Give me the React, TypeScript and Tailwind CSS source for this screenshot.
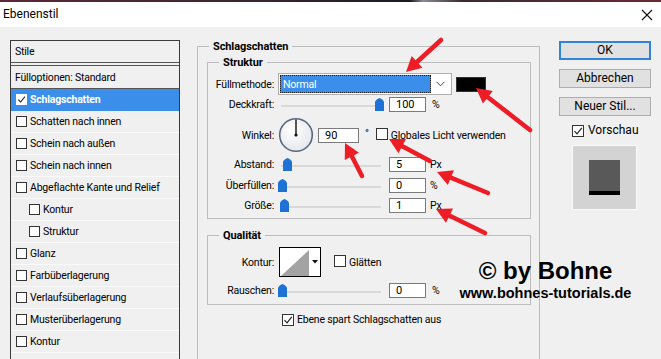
import React from "react";

function Check({ checked = false, size = 12, white = false }: { checked?: boolean; size?: number; white?: boolean }) {
  return (
    <span
      className={`inline-flex items-center justify-center shrink-0 border ${white ? "border-white bg-white" : "border-[#333333] bg-white"}`}
      style={{ width: size, height: size }}
    >
      {checked && (
        <svg width={size - 2} height={size - 2} viewBox="0 0 10 10">
          <path d="M1.5 5.2 L4 7.8 L8.8 1.8" fill="none" stroke="#222" strokeWidth="1.2" />
        </svg>
      )}
    </span>
  );
}

function ListRow({
  label,
  indent = false,
  checked = false,
  selected = false,
}: {
  label: string;
  indent?: boolean;
  checked?: boolean;
  selected?: boolean;
}) {
  return (
    <div
      className={`h-[22px] flex items-center gap-[3px] border-b ${
        selected ? "bg-[#3b8fea] border-[#3b8fea] text-white font-bold" : "border-[#fafafa]"
      } ${indent ? "pl-[18px]" : "pl-[5px]"}`}
    >
      <Check size={11} checked={checked} white={selected} />
      <span>{label}</span>
    </div>
  );
}

function Thumb() {
  return (
    <svg width="9" height="13" viewBox="0 0 9 13">
      <path d="M4.5 0 C6.5 1 9 2.5 9 4 V13 H0 V4 C0 2.5 2.5 1 4.5 0Z" fill="#1f72d5" />
    </svg>
  );
}

function Slider({ pos, w = 100 }: { pos: number; w?: number }) {
  return (
    <div className="relative h-[15px] ml-[7px] w-[108px] shrink-0">
      <div className="absolute top-[8px] left-0 h-[2px] bg-[#d9d9d9]" style={{ width: w }} />
      <div className="absolute top-[1px]" style={{ left: pos - 4 }}>
        <Thumb />
      </div>
    </div>
  );
}

function NumInput({ value, w = 37 }: { value: string; w?: number }) {
  return (
    <div
      className="h-[15px] border border-[#7a7a7a] bg-white pl-[6px] flex items-center text-[11px] leading-none shrink-0 tracking-normal"
      style={{ width: w }}
    >
      {value}
    </div>
  );
}

function Label({ children }: { children: React.ReactNode }) {
  return <div className="w-[66px] text-right shrink-0">{children}</div>;
}

function Dial() {
  return (
    <svg width="36" height="36" viewBox="0 0 36 36" className="shrink-0">
      <defs>
        <radialGradient id="dg" cx="0.4" cy="0.35" r="0.7">
          <stop offset="0" stopColor="#ffffff" />
          <stop offset="1" stopColor="#e4e6ea" />
        </radialGradient>
      </defs>
      <circle cx="18" cy="18" r="16.3" fill="url(#dg)" stroke="#5a6781" strokeWidth="1.6" />
      <line x1="18" y1="18" x2="18" y2="2.5" stroke="#111" strokeWidth="1.4" />
      <circle cx="18" cy="18" r="1.6" fill="#111" />
    </svg>
  );
}

function Button({ children, primary = false }: { children: React.ReactNode; primary?: boolean }) {
  return (
    <div
      className={`h-[19px] w-[92px] flex items-center justify-center bg-[#e1e1e1] text-[12px] tracking-normal ${
        primary ? "border-2 border-[#2f83d8]" : "border border-[#adadad]"
      }`}
    >
      {children}
    </div>
  );
}

const arrows: [number, number, number, number][] = [
  [441, 40, 406, 72],
  [530, 130, 476, 88],
  [362, 176, 345, 143],
  [430, 161, 389, 139],
  [488, 193, 437, 172],
  [485, 233, 436, 209],
];

function Arrows() {
  return (
    <svg className="absolute inset-0 pointer-events-none" width="661" height="359">
      {arrows.map(([x1, y1, x2, y2], i) => {
        const dx = x2 - x1;
        const dy = y2 - y1;
        const len = Math.hypot(dx, dy);
        const ux = dx / len;
        const uy = dy / len;
        const L = 15;
        const W = 8;
        const bx = x2 - ux * L;
        const by = y2 - uy * L;
        const px = -uy;
        const py = ux;
        return (
          <g key={i}>
            <line x1={x1} y1={y1} x2={bx + ux * 2} y2={by + uy * 2} stroke="#ee1c24" strokeWidth="4.5" strokeLinecap="round" />
            <polygon
              points={`${x2},${y2} ${bx + px * W},${by + py * W} ${bx - px * W},${by - py * W}`}
              fill="#ee1c24"
            />
          </g>
        );
      })}
    </svg>
  );
}

export default function App() {
  return (
    <div className="relative w-[661px] h-[359px] overflow-hidden bg-[#f0f0f0] font-['Roboto',sans-serif] text-[10.5px] tracking-[-0.2px] text-black leading-[13px]">
      <div className="h-[2px] bg-[linear-gradient(90deg,#5a2a35_0%,#3a2530_40%,#1a1a24_62%,#8a8a96_64%,#3a2a30_70%,#6a2a35_100%)]" />
      <div className="h-[25px] bg-white flex items-center justify-between pl-[3px] pr-[8px]">
        <span className="text-[12px] tracking-normal">Ebenenstil</span>
        <svg width="12" height="12" viewBox="0 0 12 12">
          <path d="M1 1 L11 11 M11 1 L1 11" stroke="#111" strokeWidth="1.1" />
        </svg>
      </div>

      <div className="flex items-start">
        {/* Left styles list */}
        <div className="ml-[10px] mt-[13px] w-[170px] h-[330px] border border-[#3a3a3a] border-b-0">
          <div className="h-[22px] flex items-center pl-[4px] border-b border-[#555]">Stile</div>
          <div className="h-[2px]" />
          <div className="h-[24px] flex items-center pl-[4px] border-t border-b border-[#555]">
            Fülloptionen: Standard
          </div>
          <ListRow label="Schlagschatten" checked selected />
          <ListRow label="Schatten nach innen" />
          <ListRow label="Schein nach außen" />
          <ListRow label="Schein nach innen" />
          <ListRow label="Abgeflachte Kante und Relief" />
          <ListRow label="Kontur" indent />
          <ListRow label="Struktur" indent />
          <ListRow label="Glanz" />
          <ListRow label="Farbüberlagerung" />
          <ListRow label="Verlaufsüberlagerung" />
          <ListRow label="Musterüberlagerung" />
          <ListRow label="Kontur" />
        </div>

        {/* Middle: Schlagschatten group */}
        <fieldset className="ml-[17px] mt-[13px] w-[343px] h-[330px] border border-b-0 border-[#bcbcbc]">
          <legend className="ml-[11px] px-[4px] font-bold text-[11px] tracking-[-0.1px]">Schlagschatten</legend>

          <fieldset className="ml-[9px] mt-[3px] w-[324px] border border-[#bcbcbc] pb-[5px]">
            <legend className="ml-[11px] px-[4px] font-bold text-[11px] tracking-[-0.1px]">Struktur</legend>

            <div className="mt-[4px] h-[22px] flex items-center">
              <Label>Füllmethode:</Label>
              <div className="ml-[4px] w-[174px] h-[22px] border border-[#adadad] bg-white flex items-center p-[1px]">
                <div className="flex-1 h-full bg-[#3b8fea] border border-dotted border-[#1a1a1a] text-white flex items-center pl-[2px]">
                  Normal
                </div>
                <div className="w-[19px] flex items-center justify-center">
                  <svg width="9" height="6" viewBox="0 0 9 6">
                    <path d="M0.5 0.8 L4.5 4.8 L8.5 0.8" fill="none" stroke="#444" strokeWidth="1" />
                  </svg>
                </div>
              </div>
              <div className="ml-[4px] w-[30px] h-[15px] bg-black border border-[#333]" />
            </div>

            <div className="mt-[2px] h-[15px] flex items-center">
              <Label>Deckkraft:</Label>
              <Slider pos={98} w={98} />
              <NumInput value="100" />
              <span className="ml-[6px]">%</span>
            </div>

            <div className="mt-[6px] h-[34px] flex items-center">
              <Label>Winkel:</Label>
              <div className="ml-[4px]">
                <Dial />
              </div>
              <div className="ml-[4px]">
                <NumInput value="90" w={41} />
              </div>
              <span className="ml-[6px] self-start mt-[9px]">°</span>
              <div className="ml-[7px]">
                <Check />
              </div>
              <span className="ml-[3px]">Globales Licht verwenden</span>
            </div>

            <div className="mt-[5px] h-[15px] flex items-center">
              <Label>Abstand:</Label>
              <Slider pos={6} />
              <NumInput value="5" />
              <span className="ml-[4px]">Px</span>
            </div>

            <div className="mt-[6px] h-[15px] flex items-center">
              <Label>Überfüllen:</Label>
              <Slider pos={1} />
              <NumInput value="0" />
              <span className="ml-[4px]">%</span>
            </div>

            <div className="mt-[5px] h-[15px] flex items-center">
              <Label>Größe:</Label>
              <Slider pos={3} />
              <NumInput value="1" />
              <span className="ml-[4px]">Px</span>
            </div>
          </fieldset>

          <fieldset className="ml-[9px] mt-[10px] w-[324px] border border-[#bcbcbc] pb-[6px]">
            <legend className="ml-[11px] px-[4px] font-bold text-[11px] tracking-[-0.1px]">Qualität</legend>

            <div className="mt-[5px] h-[30px] flex items-center">
              <Label>Kontur:</Label>
              <div className="ml-[5px] w-[42px] h-[30px] border border-black bg-white flex">
                <svg width="30" height="28" viewBox="0 0 30 28">
                  <polygon points="1,28 29,2 29,28" fill="#a3a3a3" />
                </svg>
                <div className="flex-1 flex items-center justify-center bg-white">
                  <svg width="6" height="4" viewBox="0 0 6 4">
                    <polygon points="0,0 6,0 3,3.5" fill="#111" />
                  </svg>
                </div>
              </div>
              <div className="ml-[13px]">
                <Check />
              </div>
              <span className="ml-[3px]">Glätten</span>
            </div>

            <div className="mt-[6px] h-[15px] flex items-center">
              <Label>Rauschen:</Label>
              <Slider pos={1} />
              <NumInput value="0" />
              <span className="ml-[6px]">%</span>
            </div>
          </fieldset>

          <div className="mt-[8px] ml-[84px] flex items-center gap-[3px]">
            <Check checked />
            <span>Ebene spart Schlagschatten aus</span>
          </div>
        </fieldset>

        {/* Right buttons */}
        <div className="ml-[19px] mt-[14px] flex flex-col">
          <Button primary>OK</Button>
          <div className="mt-[9px]">
            <Button>Abbrechen</Button>
          </div>
          <div className="mt-[9px]">
            <Button>Neuer Stil...</Button>
          </div>
          <div className="mt-[8px] ml-[13px] flex items-center gap-[4px] text-[12px] tracking-normal">
            <Check checked />
            <span>Vorschau</span>
          </div>
          <div className="mt-[8px] ml-[13px] w-[65px] h-[65px] bg-[#d3d3d3] border border-[#fafafa] flex items-center justify-center">
            <div className="w-[31px] h-[35px] bg-[#595959] flex flex-col justify-end">
              <div className="h-[4px] bg-black" />
            </div>
          </div>
        </div>
      </div>

      <Arrows />

      <div className="absolute left-[458px] top-[258px] w-[175px] flex flex-col items-center font-['Liberation_Sans',Arial,sans-serif] font-bold text-black tracking-normal">
        <div className="text-[24px] leading-[26px]">© by Bohne</div>
        <div className="text-[14.5px] leading-[17px] mt-[1px]">www.bohnes-tutorials.de</div>
      </div>
    </div>
  );
}
